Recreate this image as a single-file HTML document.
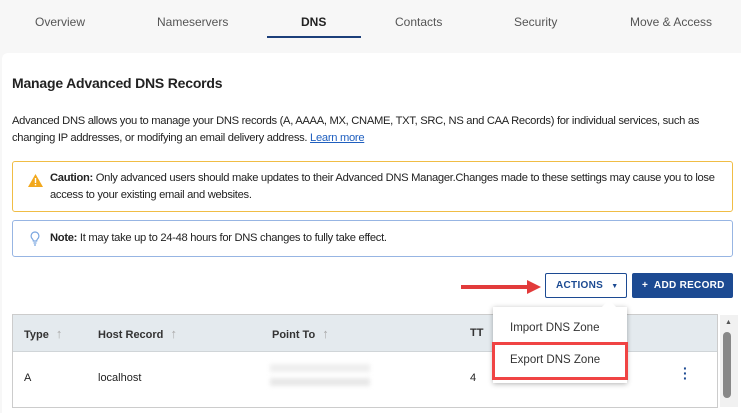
<!DOCTYPE html>
<html><head><style>
*{margin:0;padding:0;box-sizing:border-box}
body{width:741px;height:407px;overflow:hidden;background:#f7f7f7;font-family:"Liberation Sans",sans-serif;color:#222;position:relative;font-size:12px}
.a{position:absolute}
.tab{position:absolute;top:15px;font-size:12px;color:#555}
</style></head><body>
<div class="tab" style="left:35px">Overview</div>
<div class="tab" style="left:157px">Nameservers</div>
<div class="tab" style="left:301px;color:#222;font-weight:bold">DNS</div>
<div class="tab" style="left:395px">Contacts</div>
<div class="tab" style="left:514px">Security</div>
<div class="tab" style="left:630px">Move &amp; Access</div>
<div class="a" style="left:267px;top:36px;width:94px;height:2px;background:#1c3f7a"></div>
<div class="a" style="left:2px;top:53px;width:745px;height:360px;background:#fff;border-radius:6px 0 0 0"></div>
<div class="a" style="left:12px;top:75px;font-size:14px;font-weight:bold;color:#222;letter-spacing:-0.2px">Manage Advanced DNS Records</div>
<div class="a" style="left:12px;top:113px;width:720px;font-size:11.2px;line-height:17px;letter-spacing:-0.3px">Advanced DNS allows you to manage your DNS records (A, AAAA, MX, CNAME, TXT, SRC, NS and CAA Records) for individual services, such as changing IP addresses, or modifying an email delivery address. <span style="color:#1f5fbf;text-decoration:underline">Learn more</span></div>
<div class="a" style="left:12px;top:161px;width:721px;height:51px;border:1px solid #f0bd45;border-radius:3px;background:#fff"></div>
<svg class="a" style="left:28px;top:174px" width="15" height="13" viewBox="0 0 15 13"><path d="M7.5 0L15 13H0z" fill="#f2a81d"/><rect x="6.8" y="4" width="1.4" height="5" fill="#fff"/><rect x="6.8" y="10" width="1.4" height="1.4" fill="#fff"/></svg>
<div class="a" style="left:35px;top:170px;width:680px;font-size:11.2px;line-height:17px;letter-spacing:-0.3px;padding-left:0"><span style="display:inline-block;width:0"></span></div>
<div class="a" style="left:35px;top:170px;width:690px;font-size:11.2px;line-height:17px;letter-spacing:-0.3px;text-indent:0"><div style="padding-left:0;margin-left:0"><div style="margin-left:0"></div></div></div>
<div class="a" style="left:35px;top:170px;width:690px;font-size:11.2px;line-height:17px;letter-spacing:-0.3px;padding-left:0"><div style="position:relative;left:0"><div style="padding-left:0"></div></div></div>
<div class="a" style="left:35px;top:170px;width:680px;font-size:11.2px;line-height:17px;letter-spacing:-0.3px"><span style="margin-left:0"></span></div>
<div class="a" style="left:35px;top:170px;width:690px;font-size:11.2px;line-height:17px;letter-spacing:-0.3px;padding-left:0"></div>
<div class="a" style="left:35px;top:170px;width:680px;padding-left:0;font-size:11.2px;line-height:17px;letter-spacing:-0.3px"><div style="padding-left:0"></div></div>
<div class="a" style="left:35px;top:170px;width:680px;font-size:11.2px;line-height:17px;letter-spacing:-0.3px;text-indent:15px;padding-left:0"><div style="margin-left:0"></div></div>
<div class="a" style="left:35px;top:170px;width:680px;font-size:11.2px;line-height:17px;letter-spacing:-0.3px;padding-left:15px"><b>Caution:</b> Only advanced users should make updates to their Advanced DNS Manager.Changes made to these settings may cause you to lose access to your existing email and websites.</div>
<div class="a" style="left:12px;top:220px;width:721px;height:37px;border:1px solid #97b5e3;border-radius:3px;background:#fff"></div>
<svg class="a" style="left:30px;top:231px" width="10" height="15" viewBox="0 0 10 15"><path d="M5 1a4 4 0 0 0-2.5 7c.6.6.8 1.3.8 2h3.4c0-.7.2-1.4.8-2A4 4 0 0 0 5 1z" fill="none" stroke="#7aa6e0" stroke-width="1.2"/><path d="M3.5 12h3M4 14h2" stroke="#7aa6e0" stroke-width="1.2"/></svg>
<div class="a" style="left:50px;top:232px;font-size:11.2px;letter-spacing:-0.3px"><b>Note:</b> It may take up to 24-48 hours for DNS changes to fully take effect.</div>
<div class="a" style="left:545px;top:273px;width:82px;height:25px;border:1px solid #1c4a92;border-radius:2px;background:#fff;color:#1c4a92;font-size:10px;font-weight:bold;line-height:23px;padding-left:10px;letter-spacing:.3px">ACTIONS <span style="font-size:7px;margin-left:5px">▼</span></div>
<div class="a" style="left:632px;top:273px;width:101px;height:25px;background:#1c4a92;border-radius:2px;color:#fff;font-size:10px;font-weight:bold;line-height:25px;padding-left:10px;letter-spacing:.3px">+&nbsp; ADD RECORD</div>
<svg class="a" style="left:455px;top:278px" width="90" height="18"><line x1="6" y1="9" x2="76" y2="9" stroke="#e23b3b" stroke-width="4"/><path d="M72 2L86 9L72 16z" fill="#e23b3b"/></svg>
<div class="a" style="left:12px;top:314px;width:706px;height:94px;border:1px solid #ccc;background:#fff"></div>
<div class="a" style="left:13px;top:315px;width:704px;height:37px;background:#e4eaee;border-bottom:1px solid #d0d5d8"></div>
<div class="a" style="left:24px;top:326px;font-size:11px;font-weight:bold;color:#333">Type <span style="color:#aaa;font-weight:normal;font-size:13px;margin-left:4px">↑</span></div>
<div class="a" style="left:98px;top:326px;font-size:11px;font-weight:bold;color:#333">Host Record <span style="color:#aaa;font-weight:normal;font-size:13px;margin-left:4px">↑</span></div>
<div class="a" style="left:272px;top:326px;font-size:11px;font-weight:bold;color:#333">Point To <span style="color:#aaa;font-weight:normal;font-size:13px;margin-left:4px">↑</span></div>
<div class="a" style="left:470px;top:327px;font-size:11px;font-weight:bold;color:#333">TT</div>
<div class="a" style="left:24px;top:372px;font-size:11px">A</div>
<div class="a" style="left:98px;top:372px;font-size:11px">localhost</div>
<div class="a" style="left:270px;top:364px;width:100px;height:8px;background:#eee;filter:blur(2px)"></div>
<div class="a" style="left:270px;top:378px;width:100px;height:8px;background:#e8e8e8;filter:blur(2px)"></div>
<div class="a" style="left:470px;top:372px;font-size:11px">4</div>
<div class="a" style="left:683px;top:366px;color:#1c4a92;font-weight:bold;font-size:14px;line-height:5px">·<br>·<br>·</div>
<div class="a" style="left:720px;top:315px;width:18px;height:92px;background:#f1f1f1"></div>
<div class="a" style="left:725px;top:319px;font-size:7px;color:#555">▲</div>
<div class="a" style="left:723px;top:332px;width:8px;height:66px;background:#888;border-radius:4px"></div>
<div class="a" style="left:493px;top:307px;width:134px;height:76px;background:#fff;box-shadow:0 1px 5px rgba(0,0,0,.3)"></div>
<div class="a" style="left:604px;top:302px;width:10px;height:10px;background:#fff;transform:rotate(45deg)"></div>
<div class="a" style="left:510px;top:322px;font-size:11.5px;color:#333">Import DNS Zone</div>
<div class="a" style="left:492px;top:342px;width:136px;height:38px;border:3px solid #f04444"></div>
<div class="a" style="left:510px;top:354px;font-size:11.5px;color:#333">Export DNS Zone</div>
</body></html>
